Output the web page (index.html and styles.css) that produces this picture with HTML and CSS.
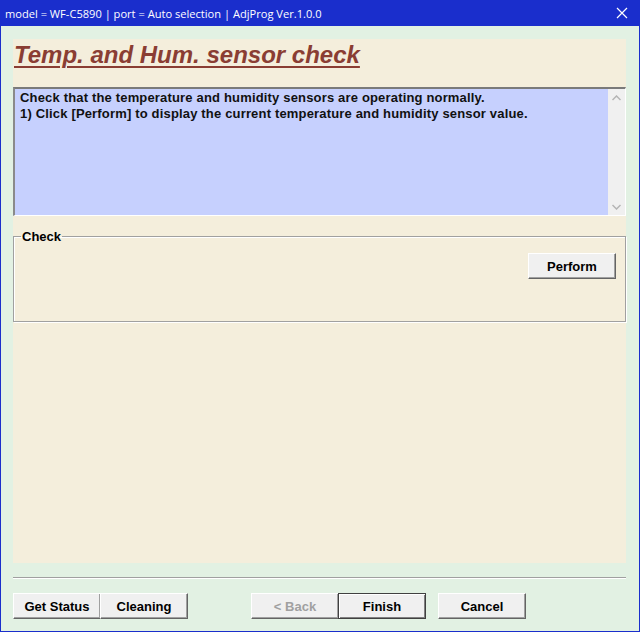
FILE: index.html
```html
<!DOCTYPE html>
<html lang="en">
<head>
  <meta charset="UTF-8">
  <title>AdjProg</title>
  <link rel="stylesheet" href="styles.css">
</head>
<body>
  <div class="window">
    <div class="titlebar">
      <span class="title-text">model = WF-C5890 | port = Auto selection | AdjProg Ver.1.0.0</span>
      <svg class="close-icon" width="12" height="12" viewBox="0 0 12 12">
        <path d="M1 1 L11 11 M11 1 L1 11" stroke="#fff" stroke-width="1.2" fill="none"/>
      </svg>
    </div>
    <div class="client">
      <div class="panel">
        <h1 class="page-title">Temp. and Hum. sensor check</h1>
        <div class="memo">
          <div class="memo-text">
            <p>Check that the temperature and humidity sensors are operating normally.</p>
            <p>1) Click [Perform] to display the current temperature and humidity sensor value.</p>
          </div>
          <div class="scrollbar">
            <svg width="9" height="6" viewBox="0 0 9 6"><path d="M0.5 5 L4.5 1 L8.5 5" stroke="#b4b4b4" stroke-width="1.5" fill="none"/></svg>
            <svg width="9" height="6" viewBox="0 0 9 6"><path d="M0.5 1 L4.5 5 L8.5 1" stroke="#b4b4b4" stroke-width="1.5" fill="none"/></svg>
          </div>
        </div>
        <fieldset class="group">
          <legend>Check</legend>
          <div class="group-row">
            <button class="btn">Perform</button>
          </div>
        </fieldset>
      </div>
      <div class="separator"></div>
      <div class="footer">
        <div class="btn-set">
          <button class="btn">Get Status</button>
          <button class="btn">Cleaning</button>
        </div>
        <div class="btn-set nav">
          <button class="btn" disabled>&lt; Back</button>
          <button class="btn default">Finish</button>
          <button class="btn cancel">Cancel</button>
        </div>
      </div>
    </div>
  </div>
</body>
</html>
```

FILE: styles.css
```css
body {
    margin: 0;
    padding: 0;
    font-family: 'Liberation Sans', Arial, sans-serif;
}

.window {
    width: 640px;
    height: 632px;
    box-sizing: border-box;
    border: 1px solid #1a2ecc;
    border-top: none;
    background-color: #e2f1e3;
    display: flex;
    flex-direction: column;
}

.titlebar {
    height: 26px;
    margin: 0 -1px;
    background-color: #1a2ecc;
    color: #fff;
    display: flex;
    align-items: center;
    justify-content: space-between;
    padding: 0 12px 0 5px;
    font-family: 'Open Sans', 'Noto Sans', sans-serif;
    font-size: 11.1px;
}

.close-icon {
    display: block;
}

.client {
    flex: 1;
    display: flex;
    flex-direction: column;
    padding: 13px 13px 0 12px;
}

.panel {
    background-color: #f4eedc;
    height: 524px;
}

.page-title {
    margin: 0;
    padding: 3px 0 0 1px;
    font-size: 24px;
    font-style: italic;
    font-weight: bold;
    color: #8a3d33;
    text-decoration: underline;
    text-decoration-thickness: 2px;
    text-underline-offset: 3px;
    line-height: 26px;
    height: 45px;
}

.memo {
    height: 129px;
    box-sizing: border-box;
    border-top: 2px solid #7a7a7a;
    border-left: 2px solid #8a8a8a;
    border-right: 1px solid #fff;
    border-bottom: 1px solid #fff;
    background-color: #c6d0fe;
    display: flex;
}

.memo-text {
    flex: 1;
    padding: 1px 5px;
    font-size: 13px;
    letter-spacing: 0.17px;
    font-weight: bold;
    color: #111;
}

.memo-text p {
    margin: 0;
    line-height: 16px;
}

.scrollbar {
    width: 17px;
    background-color: #f0f0f0;
    display: flex;
    flex-direction: column;
    justify-content: space-between;
    align-items: center;
    padding: 6px 0 5px;
}

.group {
    margin: 13px 0 0 0;
    padding: 0 9px 0 0;
    height: 93px;
    box-sizing: border-box;
    border: 1px solid #a0a0a0;
    box-shadow: inset 1px 1px 0 #fff, 1px 1px 0 #fff;
}

.group legend {
    margin-left: 7px;
    padding: 0 1px;
    font-size: 13px;
    font-weight: bold;
    color: #000;
}

.group-row {
    display: flex;
    justify-content: flex-end;
    padding-top: 9px;
}

.btn {
    width: 88px;
    height: 26px;
    box-sizing: border-box;
    background-color: #f0f0f0;
    border: 1px solid;
    border-color: #fff #646464 #646464 #fff;
    box-shadow: inset -1px -1px 0 #a0a0a0;
    font-family: 'Liberation Sans', Arial, sans-serif;
    font-size: 13px;
    font-weight: bold;
    color: #000;
    padding: 0;
}

.btn:disabled {
    color: #a0a0a0;
}

.btn.default {
    border-color: #404040;
    box-shadow: inset 1px 1px 0 #fff, inset -1px -1px 0 #808080;
}

.separator {
    margin-top: 14px;
    height: 1px;
    background-color: #a0a0a0;
    border-bottom: 1px solid #fff;
}

.footer {
    margin-top: 14px;
    display: flex;
}

.btn-set {
    display: flex;
}

.btn-set .btn + .btn {
    margin-left: -1px;
}

.nav {
    margin-left: 63px;
}

.nav .btn.cancel {
    margin-left: 12px;
}
```
